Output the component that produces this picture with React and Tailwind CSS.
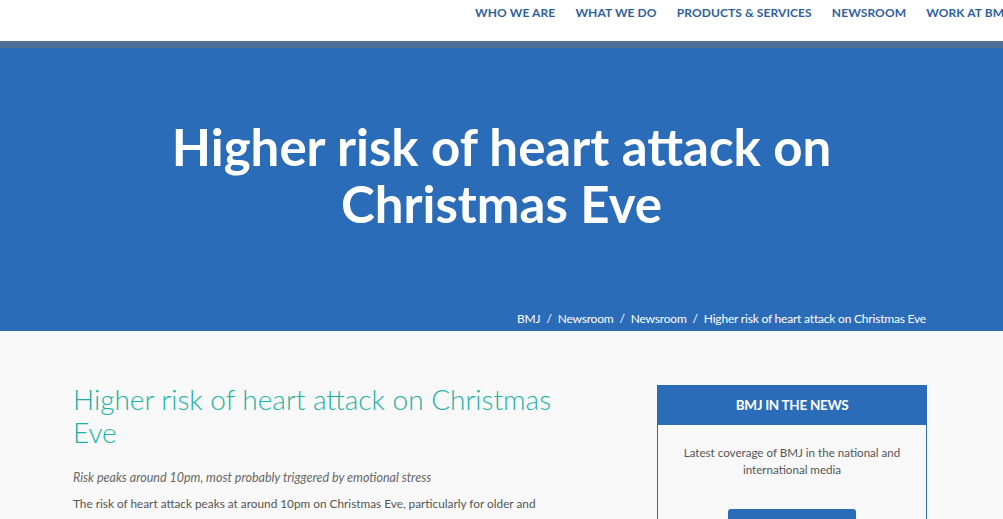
export default function App() {
  const nav = ["WHO WE ARE", "WHAT WE DO", "PRODUCTS & SERVICES", "NEWSROOM", "WORK AT BMJ"];
  const crumbs = ["BMJ", "Newsroom", "Newsroom", "Higher risk of heart attack on Christmas Eve"];

  return (
    <div className="min-h-screen bg-[#f8f8f8] font-['Lato',sans-serif]">
      {/* Top nav */}
      <header className="h-[41px] bg-white overflow-hidden">
        <nav className="flex items-start gap-[20px] whitespace-nowrap pl-[475px] pt-[4px]">
          {nav.map((item) => (
            <a
              key={item}
              href="#"
              className="text-[12px] leading-[18px] font-bold tracking-[0.1px] text-[#2f5f9e]"
            >
              {item}
            </a>
          ))}
        </nav>
      </header>
      <div className="h-[7px] bg-[#4e7195]" />

      {/* Hero */}
      <section className="h-[283px] bg-[#2b6cb8] flex flex-col">
        <div className="flex-1 flex items-start justify-center pt-[70px]">
          <h1 className="text-center text-[51px] leading-[57px] font-bold text-white w-[720px]">
            Higher risk of heart attack on Christmas Eve
          </h1>
        </div>
        <div className="ml-[73px] w-[853px] flex justify-end pb-[3px]">
          <div className="flex items-center gap-[6px] text-[12px] text-white tracking-[-0.2px]">
            {crumbs.map((c, i) => (
              <span key={i} className="flex items-center gap-[6px]">
                {i > 0 && <span>/</span>}
                <a href="#">{c}</a>
              </span>
            ))}
          </div>
        </div>
      </section>

      {/* Content */}
      <main className="ml-[73px] w-[854px] flex justify-between pt-[52px]">
        <article className="w-[490px]">
          <h2 className="text-[28px] leading-[33px] font-light text-[#1db3a4]">
            Higher risk of heart attack on Christmas Eve
          </h2>
          <p className="mt-[20px] text-[12.5px] italic text-[#666]">
            Risk peaks around 10pm, most probably triggered by emotional stress
          </p>
          <p className="mt-[6px] text-[11.8px] leading-[20px] text-[#555]">
            The risk of heart attack peaks at around 10pm on Christmas Eve, particularly for older and
            sicker people, most likely due to heightened emotional stress, finds a Swedish study in this
            week's Christmas issue of The BMJ.
          </p>
        </article>

        <aside className="mt-[2px] w-[270px] self-start border border-[#2b6cb8] bg-[#f8f8f8]">
          <div className="h-[39px] bg-[#2b6cb8] flex items-center justify-center">
            <h3 className="text-[13.5px] font-bold text-white tracking-[-0.3px]">BMJ IN THE NEWS</h3>
          </div>
          <div className="px-4 pt-[19px] pb-6 flex flex-col items-center">
            <p className="text-center text-[11.6px] leading-[17px] text-[#555]">
              Latest coverage of BMJ in the national and
              <br />
              international media
            </p>
            <a
              href="#"
              className="mt-[31px] w-[128px] h-[30px] rounded-[3px] bg-[#2b6cb8] flex items-center justify-center text-[10px] font-bold text-white"
            >
              VISIT BMJ IN THE NEWS
            </a>
          </div>
        </aside>
      </main>
    </div>
  );
}
